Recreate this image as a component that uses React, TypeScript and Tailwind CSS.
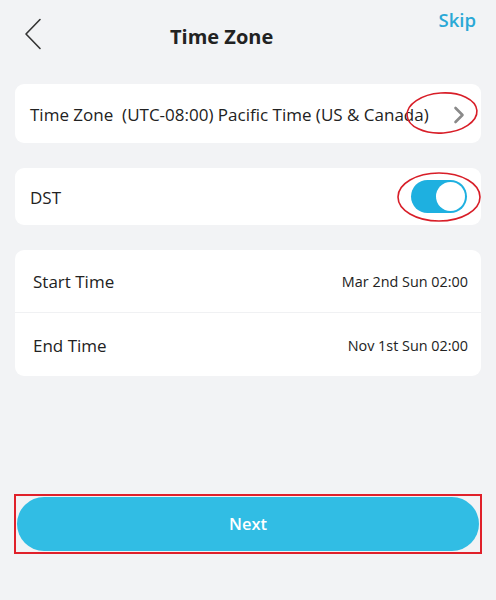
import React, { useState } from 'react'

export default function App() {
  const [dst, setDst] = useState(true)

  return (
    <div
      className="relative min-h-[600px] w-full bg-[#f2f3f5] text-[#222]"
      style={{ fontFamily: '"Open Sans", "Noto Sans", sans-serif' }}
    >
      {/* header */}
      <div className="flex h-[84px] items-start">
        <button className="ml-[24px] mt-[18px]">
          <svg width="18" height="32" viewBox="0 0 18 32" fill="none">
            <path d="M16 1.5 L2 16 L16 30.5" stroke="#333" strokeWidth="1.6" strokeLinecap="round" strokeLinejoin="round" />
          </svg>
        </button>
        <h1 className="ml-[128px] mt-[23px] text-[20px] font-bold leading-[28px] text-[#222]">Time Zone</h1>
        <button className="ml-auto mr-[20px] mt-[8px] text-[18.5px] font-semibold leading-[24px] text-[#2aa8d6]">Skip</button>
      </div>

      <div className="flex flex-col px-[15px]">
        {/* time zone row */}
        <div className="flex h-[59px] items-center rounded-[9px] bg-white pl-[15px] pr-[16px] pt-[2px]">
          <span className="whitespace-nowrap text-[17px]">Time Zone&nbsp;&nbsp;(UTC-08:00) Pacific Time (US &amp; Canada)</span>
          <svg className="ml-auto" width="12" height="18" viewBox="0 0 12 18" fill="none">
            <path d="M2.5 2 L9.5 9 L2.5 16" stroke="#8a8a8a" strokeWidth="2.6" strokeLinecap="round" strokeLinejoin="round" />
          </svg>
        </div>

        {/* DST row */}
        <div className="mt-[25px] flex h-[57px] items-center rounded-[9px] bg-white pl-[15px] pr-[14px]">
          <span className="pt-[2px] text-[17px]">DST</span>
          <button
            onClick={() => setDst(!dst)}
            className={`ml-auto flex h-[33px] w-[56px] items-center rounded-full px-[2px] ${dst ? 'justify-end bg-[#1eb0e0]' : 'justify-start bg-[#d0d0d0]'}`}
          >
            <span className="block h-[29px] w-[29px] rounded-full bg-white" />
          </button>
        </div>

        {/* start / end */}
        <div className="mt-[25px] flex flex-col rounded-[9px] bg-white">
          <div className="flex h-[63px] items-center border-b border-[#f0f1f3] pl-[18px] pr-[13px] pt-[2px]">
            <span className="text-[17px]">Start Time</span>
            <span className="ml-auto text-[14.4px]">Mar 2nd Sun 02:00</span>
          </div>
          <div className="flex h-[63px] items-center pl-[18px] pr-[13px] pt-[2px]">
            <span className="text-[17px]">End Time</span>
            <span className="ml-auto text-[14.4px]">Nov 1st Sun 02:00</span>
          </div>
        </div>

        {/* next */}
        <div className="mt-[118px] -mx-[1px] border-2 border-[#e0202a] p-[1px]">
          <button className="flex h-[54px] w-full items-center justify-center rounded-full bg-[#31bde4] pt-[1px] text-[16.5px] font-semibold text-white">
            Next
          </button>
        </div>
      </div>

      {/* annotation marks */}
      <svg className="pointer-events-none absolute left-0 top-0" width="496" height="600">
        <ellipse cx="442" cy="113" rx="35" ry="20" fill="none" stroke="#d81e28" strokeWidth="1.6" transform="rotate(-4 442 113)" />
        <ellipse cx="439" cy="197" rx="41" ry="24" fill="none" stroke="#d81e28" strokeWidth="1.6" />
      </svg>
    </div>
  )
}
